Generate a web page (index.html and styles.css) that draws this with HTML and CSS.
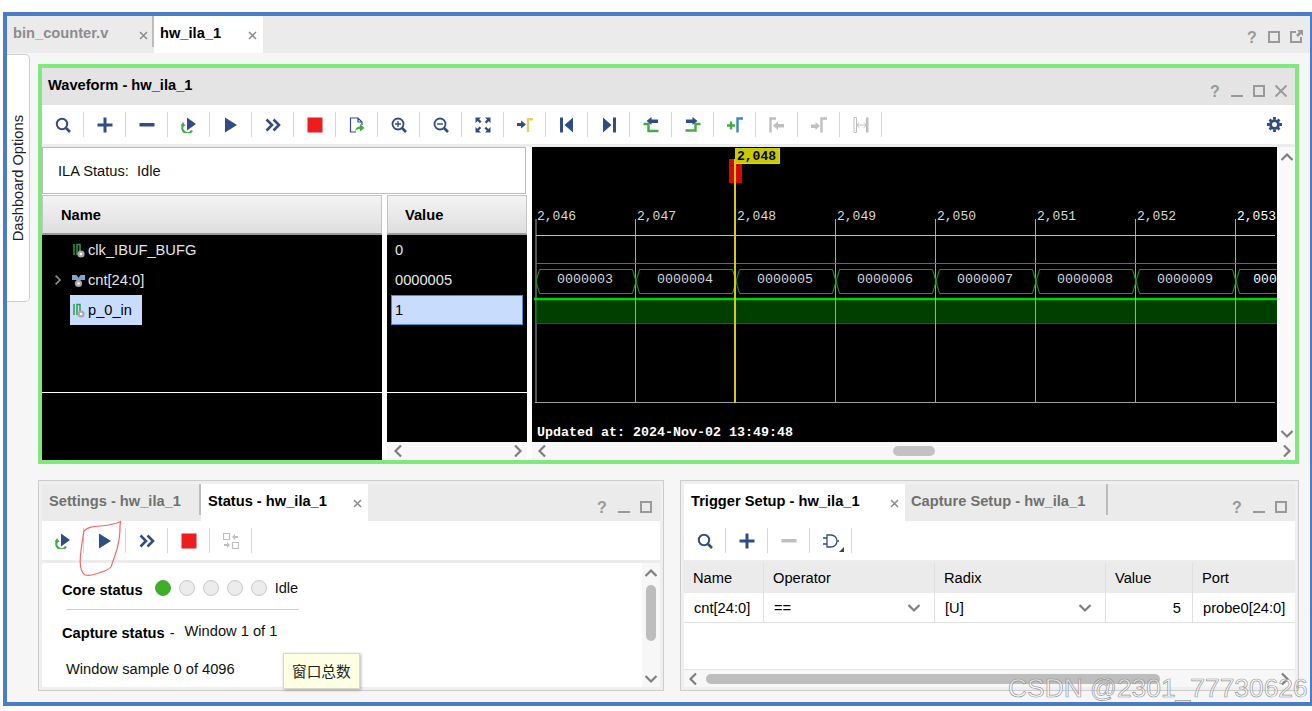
FILE: index.html
```html
<!DOCTYPE html>
<html lang="en">
<head>
    <meta charset="UTF-8">
    <meta name="viewport" content="width=device-width, initial-scale=1.0">
    <title>hw_ila_1</title>
    <link rel="stylesheet" href="styles.css">
</head>
<body>
    <!-- icon sheet -->
    <svg class="sheet" width="0" height="0">
        <symbol id="i-search" viewBox="0 0 16 16"><circle cx="7" cy="7" r="5.2" fill="none" stroke="currentColor" stroke-width="2"/><path d="M11 11l4 4" stroke="currentColor" stroke-width="2.6"/></symbol>
        <symbol id="i-plus" viewBox="0 0 16 16"><path d="M6.5.5h3v6h6v3h-6v6h-3v-6h-6v-3h6z" fill="currentColor"/></symbol>
        <symbol id="i-minus" viewBox="0 0 16 16"><rect x=".5" y="6" width="15" height="3.5" fill="currentColor"/></symbol>
        <symbol id="i-rerun" viewBox="0 0 16 16"><path d="M6 .5l9 6.5-9 6.5z" fill="currentColor"/><path d="M2 8.5a5 5 0 0 0 9 5" fill="none" stroke="#3fae3f" stroke-width="2.2"/><path d="M-.5 9h5l-2.5-4z" fill="#3fae3f"/></symbol>
        <symbol id="i-play" viewBox="0 0 16 16"><path d="M2 .5l12 7.5-12 7.5z" fill="currentColor"/></symbol>
        <symbol id="i-ff" viewBox="0 0 16 16"><path d="M1.5 2.5L7 8l-5.500 5.500M8.500 2.500L14 8l-5.500 5.500" fill="none" stroke="currentColor" stroke-width="2.6"/></symbol>
        <symbol id="i-stop" viewBox="0 0 16 16"><rect x=".5" y=".5" width="15" height="15" fill="#ee1c1c"/></symbol>
        <symbol id="i-export" viewBox="0 0 16 16"><path d="M7 15H1.5V1H9l4 4v3M9 1v4h4" fill="none" stroke="currentColor" stroke-width="1.2"/><path d="M6 14c.5-3 2.5-4.5 5-4.5V7l4.500 4-4.500 3.500V12c-2 0-3.500.5-5 2z" fill="#3fae3f"/></symbol>
        <symbol id="i-zoomin" viewBox="0 0 16 16"><circle cx="7" cy="7" r="5.5" fill="none" stroke="currentColor" stroke-width="1.8"/><path d="M11 11l4 4" stroke="currentColor" stroke-width="2.6"/><path d="M4 7h6M7 4v6" stroke="currentColor" stroke-width="1.3"/></symbol>
        <symbol id="i-zoomout" viewBox="0 0 16 16"><circle cx="7" cy="7" r="5.5" fill="none" stroke="currentColor" stroke-width="1.8"/><path d="M11 11l4 4" stroke="currentColor" stroke-width="2.6"/><path d="M4 7h6" stroke="currentColor" stroke-width="1.4"/></symbol>
        <symbol id="i-fit" viewBox="0 0 16 16"><path d="M.5.5H6L4.200 2.300l2.300 2.300-1.600 1.600-2.300-2.300L.5 6zM15.500.5V6l-1.800-1.800-2.300 2.300-1.600-1.600 2.300-2.300L10 .5zM.5 15.500V10l1.800 1.800 2.300-2.300 1.600 1.600-2.300 2.300L6 15.500zM15.500 15.500H10l1.800-1.800-2.300-2.300 1.600-1.600 2.300 2.300 2.100-2.100z" fill="currentColor"/></symbol>
        <symbol id="i-mark" viewBox="0 0 16 16"><path d="M0 6h4V3.500l5 4-5 4V9H0z" fill="currentColor"/><path d="M11 15V2.200h5" fill="none" stroke="#e6d06c" stroke-width="2.4"/></symbol>
        <symbol id="i-first" viewBox="0 0 16 16"><rect x="1" y=".5" width="3" height="15" fill="currentColor"/><path d="M14 .5v15L5.500 8z" fill="currentColor"/></symbol>
        <symbol id="i-last" viewBox="0 0 16 16"><rect x="12" y=".5" width="3" height="15" fill="currentColor"/><path d="M2 .5v15L10.500 8z" fill="currentColor"/></symbol>
        <symbol id="i-stepl" viewBox="0 0 16 16"><path d="M.5 7h5v7h10" fill="none" stroke="#3fae3f" stroke-width="2.4"/><path d="M3.500 4l5-4v2.500H15V6H8.500v2z" fill="currentColor"/></symbol>
        <symbol id="i-stepr" viewBox="0 0 16 16"><path d="M.5 13.500h10V7h5" fill="none" stroke="#3fae3f" stroke-width="2.4"/><path d="M12.500 4l-5-4v2.500H1V6h6.500v2z" fill="currentColor"/></symbol>
        <symbol id="i-addmark" viewBox="0 0 16 16"><path d="M0 8.500h8M4 4.500v8" stroke="#3fae3f" stroke-width="2.4"/><path d="M10.500 15.500V1.500H16" fill="none" stroke="#3d88bb" stroke-width="2.4"/></symbol>
        <symbol id="i-prevm" viewBox="0 0 16 16"><path d="M1.500 15.500V1.500H7" fill="none" stroke="currentColor" stroke-width="2.4"/><path d="M4 8.500l5-4V7h6v3.500H9V13z" fill="currentColor"/></symbol>
        <symbol id="i-nextm" viewBox="0 0 16 16"><path d="M10.500 15.500V1.500H16" fill="none" stroke="currentColor" stroke-width="2.4"/><path d="M9 9L4.500 5v2.500H0V11h4.500v2z" fill="currentColor"/></symbol>
        <symbol id="i-span" viewBox="0 0 16 16"><path d="M1 .5h2.500v15H1z" fill="none" stroke="currentColor"/><rect x="13" y=".5" width="2.500" height="15" fill="currentColor"/><path d="M4 8h9M6 5.500L3.800 8 6 10.500M11 5.500L13.200 8 11 10.500" fill="none" stroke="currentColor"/></symbol>
        <symbol id="i-swap" viewBox="0 0 16 16"><path d="M.5.5h6v6h-6zM9.500 9.500h6v6h-6z" fill="none" stroke="currentColor" stroke-width="1.2"/><path d="M9 4l3-3v2h3v2h-3v2zM7 12l-3 3v-2H1v-2h3V9z" fill="currentColor"/></symbol>
        <symbol id="i-gate" viewBox="0 0 16 16"><path d="M4 2h4a6 6 0 0 1 0 12H4zM0 5h4M0 11h4M14 8h2" fill="none" stroke="currentColor" stroke-width="1.3"/></symbol>
        <symbol id="i-min" viewBox="0 0 14 14"><rect x="1" y="11" width="12" height="2" fill="currentColor"/></symbol>
        <symbol id="i-max" viewBox="0 0 14 14"><rect x="2" y="2" width="10" height="10" fill="none" stroke="currentColor" stroke-width="2"/></symbol>
        <symbol id="i-pop" viewBox="0 0 14 14"><path d="M7 2H2v10h10V7" fill="none" stroke="currentColor" stroke-width="2"/><path d="M8 0h6v6l-2-2-3 3-2-2 3-3z" fill="currentColor"/></symbol>
        <symbol id="i-close" viewBox="0 0 14 14"><path d="M1.500 1.500l11 11M12.500 1.500l-11 11" stroke="currentColor" stroke-width="1.8"/></symbol>
        <symbol id="i-x" viewBox="0 0 9 9"><path d="M1 1l7 7M8 1L1 8" stroke="currentColor" stroke-width="1.5"/></symbol>
        <symbol id="i-up" viewBox="0 0 14 10"><path d="M1.500 8L7 2.500 12.500 8" fill="none" stroke="currentColor" stroke-width="2.2"/></symbol>
        <symbol id="i-down" viewBox="0 0 14 10"><path d="M1.500 2L7 7.500 12.500 2" fill="none" stroke="currentColor" stroke-width="2.2"/></symbol>
        <symbol id="i-left" viewBox="0 0 10 14"><path d="M8 1.500L2.500 7 8 12.500" fill="none" stroke="currentColor" stroke-width="2.2"/></symbol>
        <symbol id="i-right" viewBox="0 0 10 14"><path d="M2 1.500L7.500 7 2 12.500" fill="none" stroke="currentColor" stroke-width="2.2"/></symbol>
        <symbol id="i-wire" viewBox="0 0 13 15"><path d="M2 1v11M5 12V1.500h3V8" fill="none" stroke="#2f9c4a" stroke-width="1.5"/><circle cx="9" cy="11" r="3.600" fill="#a9a9a9"/><circle cx="9" cy="11" r="1.300" fill="#fff"/></symbol>
        <symbol id="i-bus" viewBox="0 0 13 15"><path d="M0 2h4.500l2 3 2-3H13v5H9L6.500 9 4 7H0z" fill="#7da7c9"/><circle cx="6.500" cy="10.500" r="3.600" fill="#a9a9a9"/><circle cx="6.500" cy="10.500" r="1.300" fill="#fff"/></symbol>
        <symbol id="i-gear" viewBox="0 0 16 16"><circle cx="8" cy="8" r="4.200" fill="none" stroke="currentColor" stroke-width="3"/><path d="M6.500 0h3v3h-3zM6.500 13h3v3h-3zM0 6.500h3v3H0zM13 6.500h3v3h-3zM1.700 3.800l2.100-2.100 2 2-2.100 2.100zM10.200 12.300l2.100-2.100 2 2-2.100 2.100zM1.700 12.200l2-2 2.100 2.100-2 2zM10.200 3.700l2-2 2.100 2.100-2 2z" fill="currentColor"/></symbol>
    </svg>

    <div class="frame">
        <div class="tabs top-tabs">
            <div class="tab off tab-file">bin_counter.v<svg class="tab-x"><use href="#i-x"/></svg></div>
            <div class="tab on tab-ila">hw_ila_1<svg class="tab-x"><use href="#i-x"/></svg></div>
            <div class="win-btns top-btns">
                <span class="help">?</span><svg><use href="#i-max"/></svg><svg><use href="#i-pop"/></svg>
            </div>
        </div>

        <div class="doc">
            <div class="side-tab"><span>Dashboard Options</span></div>

            <div class="work">
                <!-- waveform window -->
                <section class="wave-win">
                    <div class="title-bar">
                        <span class="title">Waveform - hw_ila_1</span>
                        <div class="win-btns">
                            <span class="help">?</span><svg><use href="#i-min"/></svg><svg><use href="#i-max"/></svg><svg><use href="#i-close"/></svg>
                        </div>
                    </div>
                    <div class="toolbar">
                        <div class="tool"><svg><use href="#i-search"/></svg></div>
                        <div class="tool"><svg><use href="#i-plus"/></svg></div>
                        <div class="tool"><svg><use href="#i-minus"/></svg></div>
                        <div class="tool"><svg><use href="#i-rerun"/></svg></div>
                        <div class="tool"><svg><use href="#i-play"/></svg></div>
                        <div class="tool"><svg><use href="#i-ff"/></svg></div>
                        <div class="tool"><svg><use href="#i-stop"/></svg></div>
                        <div class="tool"><svg><use href="#i-export"/></svg></div>
                        <div class="tool"><svg><use href="#i-zoomin"/></svg></div>
                        <div class="tool"><svg><use href="#i-zoomout"/></svg></div>
                        <div class="tool"><svg><use href="#i-fit"/></svg></div>
                        <div class="tool"><svg><use href="#i-mark"/></svg></div>
                        <div class="tool"><svg><use href="#i-first"/></svg></div>
                        <div class="tool"><svg><use href="#i-last"/></svg></div>
                        <div class="tool"><svg><use href="#i-stepl"/></svg></div>
                        <div class="tool"><svg><use href="#i-stepr"/></svg></div>
                        <div class="tool"><svg><use href="#i-addmark"/></svg></div>
                        <div class="tool off"><svg><use href="#i-prevm"/></svg></div>
                        <div class="tool off"><svg><use href="#i-nextm"/></svg></div>
                        <div class="tool off"><svg><use href="#i-span"/></svg></div>
                        <svg class="gear"><use href="#i-gear"/></svg>
                    </div>

                    <div class="wave-body">
                        <div class="signals">
                            <div class="ila-status">ILA Status:&nbsp; Idle</div>
                            <div class="sig-cols">
                                <div class="name-col">
                                    <div class="col-head">Name</div>
                                    <div class="sig-rows">
                                        <div class="sig-row"><svg class="sig-ico"><use href="#i-wire"/></svg><span>clk_IBUF_BUFG</span></div>
                                        <div class="sig-row"><svg class="sig-arrow"><use href="#i-right"/></svg><svg class="sig-ico"><use href="#i-bus"/></svg><span>cnt[24:0]</span></div>
                                        <div class="sig-row"><div class="sig-sel"><svg class="sig-ico"><use href="#i-wire"/></svg><span>p_0_in</span></div></div>
                                    </div>
                                </div>
                                <div class="value-col">
                                    <div class="col-head">Value</div>
                                    <div class="sig-rows">
                                        <div class="val-row">0</div>
                                        <div class="val-row">0000005</div>
                                        <div class="val-row val-sel">1</div>
                                    </div>
                                    <div class="val-rest"></div>
                                    <div class="hscroll">
                                        <svg class="arr-h"><use href="#i-left"/></svg>
                                        <svg class="arr-h"><use href="#i-right"/></svg>
                                    </div>
                                </div>
                            </div>
                        </div>

                        <div class="wave-col">
                            <div class="wave-top">
                                <svg class="wave" width="745" height="295" viewBox="532 147 745 295">
                                    <rect x="532" y="147" width="745" height="295" fill="#000"/>
                                    <g class="tick-lines">
                                        <path d="M536 219V403" stroke="#777"/>
                                        <path d="M635.5 219V403M835.5 219V403M935.5 219V403M1035.5 219V403M1135.5 219V403M1235.5 219V403"/>
                                    </g>
                                    <path d="M536 235.5H1275" stroke="#bdbdbd"/>
                                    <path d="M536 263.5H1277" stroke="#1a9c1a"/>
                                    <g class="bus">
                                        <path d="M536 281.5l3.500-12h93l3.500 12-3.500 12h-93z"/>
                                        <path d="M636 281.5l3.500-12h93l3.500 12-3.500 12h-93z"/>
                                        <path d="M736 281.5l3.500-12h93l3.500 12-3.500 12h-93z"/>
                                        <path d="M836 281.5l3.500-12h93l3.500 12-3.500 12h-93z"/>
                                        <path d="M936 281.5l3.500-12h93l3.500 12-3.500 12h-93z"/>
                                        <path d="M1036 281.5l3.500-12h93l3.500 12-3.500 12h-93z"/>
                                        <path d="M1136 281.5l3.500-12h93l3.500 12-3.500 12h-93z"/>
                                        <path d="M1236 281.5l3.500-12h50"/>
                                        <path d="M1236 281.5l3.500 12h50"/>
                                    </g>
                                    <g class="bus-text">
                                        <text x="585" y="283">0000003</text>
                                        <text x="685" y="283">0000004</text>
                                        <text x="785" y="283">0000005</text>
                                        <text x="885" y="283">0000006</text>
                                        <text x="985" y="283">0000007</text>
                                        <text x="1085" y="283">0000008</text>
                                        <text x="1185" y="283">0000009</text>
                                        <text x="1265" y="283" class="bright last-cell">000</text>
                                    </g>
                                    <rect x="536" y="300" width="741" height="23" fill="#003f00"/>
                                    <path d="M536.5 300V323.5H1277" fill="none" stroke="#0b6f0b"/>
                                    <path d="M534 299H1277" stroke="#00d400" stroke-width="2.500"/>
                                    <g class="tick-lines">
                                        <path d="M635.5 294V403M835.5 294V403M935.5 294V403M1035.5 294V403M1135.5 294V403M1235.5 294V403"/>
                                    </g>
                                    <path d="M535 402.5H1275" stroke="#a0a0a0"/>
                                    <g class="ticks">
                                        <text x="537" y="220">2,046</text>
                                        <text x="637" y="220">2,047</text>
                                        <text x="737" y="220">2,048</text>
                                        <text x="837" y="220">2,049</text>
                                        <text x="937" y="220">2,050</text>
                                        <text x="1037" y="220">2,051</text>
                                        <text x="1137" y="220">2,052</text>
                                        <text x="1237" y="220" class="bright">2,053</text>
                                    </g>
                                    <rect x="729" y="159" width="13" height="24" fill="#d40a0a"/>
                                    <path d="M731 165.5h7" stroke="#000" stroke-dasharray="2 1"/>
                                    <rect x="735" y="148" width="44" height="15" fill="#c9c900"/>
                                    <path d="M735 163.5H779.5V148" fill="none" stroke="#c9c9a0"/>
                                    <text x="737" y="160" class="cursor-label">2,048</text>
                                    <rect x="734" y="159" width="2" height="244" fill="#d6cb12"/>
                                    <text x="537" y="436" class="updated">Updated at: 2024-Nov-02 13:49:48</text>
                                </svg>
                                <div class="vscroll wave-v">
                                    <svg class="arr-v"><use href="#i-up"/></svg>
                                    <svg class="arr-v"><use href="#i-down"/></svg>
                                </div>
                            </div>
                            <div class="hscroll wave-h">
                                <svg class="arr-h"><use href="#i-left"/></svg>
                                <div class="h-thumb-track"><div class="h-thumb"></div></div>
                                <svg class="arr-h"><use href="#i-right"/></svg>
                            </div>
                        </div>
                    </div>
                </section>

                <div class="lower">
                    <!-- settings / status -->
                    <section class="panel panel-status">
                        <div class="tabs">
                            <div class="tab off tab-settings">Settings - hw_ila_1</div>
                            <div class="tab on tab-status">Status - hw_ila_1<svg class="tab-x"><use href="#i-x"/></svg></div>
                            <div class="win-btns">
                                <span class="help">?</span><svg><use href="#i-min"/></svg><svg><use href="#i-max"/></svg>
                            </div>
                        </div>
                        <div class="toolbar">
                            <div class="tool"><svg><use href="#i-rerun"/></svg></div>
                            <div class="tool"><svg><use href="#i-play"/></svg></div>
                            <div class="tool"><svg><use href="#i-ff"/></svg></div>
                            <div class="tool"><svg><use href="#i-stop"/></svg></div>
                            <div class="tool off"><svg><use href="#i-swap"/></svg></div>
                        </div>
                        <div class="status-body">
                            <div class="status-text">
                                <div class="core-row">
                                    <strong>Core status</strong>
                                    <div class="leds">
                                        <i class="led led-on"></i><i class="led"></i><i class="led"></i><i class="led"></i><i class="led"></i>
                                    </div>
                                    <span>Idle</span>
                                </div>
                                <div class="rule"></div>
                                <div class="capture-row"><strong>Capture status</strong><span class="dash">-</span><span class="win-of">Window 1 of 1</span></div>
                                <div class="sample-row">Window sample 0 of 4096</div>
                            </div>
                            <div class="vscroll status-v">
                                <svg class="arr-v"><use href="#i-up"/></svg>
                                <div class="v-thumb"></div>
                                <svg class="arr-v"><use href="#i-down"/></svg>
                            </div>
                        </div>
                    </section>

                    <!-- trigger setup -->
                    <section class="panel panel-trigger">
                        <div class="tabs">
                            <div class="tab on tab-trigger">Trigger Setup - hw_ila_1<svg class="tab-x"><use href="#i-x"/></svg></div>
                            <div class="tab off tab-capture">Capture Setup - hw_ila_1</div>
                            <div class="win-btns">
                                <span class="help">?</span><svg><use href="#i-min"/></svg><svg><use href="#i-max"/></svg>
                            </div>
                        </div>
                        <div class="toolbar">
                            <div class="tool"><svg><use href="#i-search"/></svg></div>
                            <div class="tool"><svg><use href="#i-plus"/></svg></div>
                            <div class="tool off"><svg><use href="#i-minus"/></svg></div>
                            <div class="tool tool-gate"><svg><use href="#i-gate"/></svg><b class="corner"></b></div>
                        </div>
                        <div class="trig-body">
                            <div class="trow thead">
                                <div>Name</div><div>Operator</div><div>Radix</div><div>Value</div><div>Port</div>
                            </div>
                            <div class="trow">
                                <div>cnt[24:0]</div>
                                <div class="combo">==<svg class="arr-v"><use href="#i-down"/></svg></div>
                                <div class="combo">[U]<svg class="arr-v"><use href="#i-down"/></svg></div>
                                <div class="num">5</div>
                                <div>probe0[24:0]</div>
                            </div>
                            <div class="trig-rest"></div>
                            <div class="hscroll trig-h">
                                <svg class="arr-h"><use href="#i-left"/></svg>
                                <div class="trig-thumb"></div>
                                <svg class="arr-h"><use href="#i-right"/></svg>
                            </div>
                        </div>
                    </section>
                </div>
            </div>
        </div>
    </div>

    <div class="tooltip">窗口总数</div>

    <svg class="scribble" width="50" height="64" viewBox="76 518 50 64">
        <path d="M120.5 521.5C113 525 108 525.5 100 526c-7 .5-12 1-16 5-1.500 9-4 22-3.800 31 .2 6 .8 11 5 13 5 1.500 10-1 15-2.500 4-1.200 8-2 11-6 2-6 4-12 6-18 2-8 3-15 2.800-22.500z" fill="none" stroke="#f0686e" stroke-width="1.2"/>
    </svg>

    <div class="watermark">CSDN @2301_77730626</div>
</body>
</html>
```

FILE: styles.css
```css
* { box-sizing: border-box; }
html, body {
    margin: 0;
    height: 100%;
    overflow: hidden;
}
body {
    background: white;
    color: black;
    font-family: "Liberation Sans", Arial, sans-serif;
    font-size: 14.67px;
}
.sheet { display: block; }

.frame {
    width: 1309px;
    height: 694px;
    margin: 12px 0 0 3px;
    border: 4px solid #4a7ccb;
    border-right-width: 2px;
    background: #f6f6f6;
}

/* tabs */
.tabs {
    display: flex;
    height: 37px;
    background: #ebebeb;
    font-weight: bold;
}
.tab {
    display: flex;
    align-items: center;
    height: 37px;
    padding: 0 6px 3px 7px;
}
.tab.off {
    color: #707070;
    background: linear-gradient(#bdbdbd, #bdbdbd) right top / 2px 31px no-repeat;
}
.tab.on { background: white; }
.tab-x {
    width: 9px;
    height: 9px;
    margin: 5px 0 0 auto;
    color: #8c8c8c;
}
.top-tabs .tab.off { color: #8d8d8d; }
.tab-file { width: 147px; padding-left: 6px; }
.tab-ila { width: 109px; padding-left: 6px; }
.tab-settings { width: 159px; }
.tab-status { width: 167px; }
.tab-trigger { width: 221px; }
.tab-capture { width: 203px; padding-left: 6px; }

.win-btns {
    display: flex;
    gap: 8px;
    margin-left: auto;
    padding: 16px 8px 0 0;
    color: #999;
    font-weight: bold;
}
.win-btns svg { width: 14px; height: 14px; }
.help {
    width: 14px;
    height: 14px;
    font-size: 16px;
    line-height: 15px;
    text-align: center;
}
.top-btns { padding: 14px 7px 0 0; }

.doc {
    display: flex;
    align-items: flex-start;
    height: 649px;
}
.side-tab {
    display: flex;
    align-items: center;
    justify-content: center;
    width: 23px;
    height: 248px;
    margin: 1px 8px 0 0;
    background: white;
    border: 1px solid #ccc;
    border-left: none;
    border-radius: 0 5px 5px 0;
}
.side-tab span {
    writing-mode: vertical-rl;
    transform: rotate(180deg);
    color: #222;
}
.work {
    width: 1261px;
    margin-top: 11px;
}

/* waveform window */
.wave-win {
    height: 400px;
    border: 4px solid #80e87c;
    background: white;
}
.title-bar {
    display: flex;
    height: 37px;
    background: #e4e4e4;
    font-weight: bold;
}
.title { padding: 9px 0 0 6px; }
.title-bar .win-btns { padding: 16px 7px 0 0; }

.toolbar {
    display: flex;
    align-items: center;
    height: 42px;
    background: white;
    border-bottom: 3px solid #ececec;
}
.tool {
    display: flex;
    align-items: center;
    justify-content: center;
    width: 42px;
    height: 25px;
    border-right: 1px solid #d6d6d6;
    color: #2f4e85;
}
.tool svg { width: 16px; height: 16px; }
.tool.off { color: #bfbfbf; }
.tool-gate { position: relative; }
.corner {
    position: absolute;
    right: 7px;
    bottom: 1px;
    border-left: 5px solid transparent;
    border-bottom: 5px solid #444;
}
.gear {
    width: 15px;
    height: 15px;
    margin-left: auto;
    margin-right: 13px;
    color: #2f4e85;
}

.wave-body {
    display: flex;
    height: 313px;
}
.signals { width: 490px; }
.ila-status {
    width: 484px;
    height: 47px;
    padding: 15px 0 0 15px;
    border: 1px solid #bbb;
    color: #111;
}
.sig-cols {
    display: flex;
    gap: 5px;
    margin-top: 1px;
    height: 265px;
}
.name-col { width: 340px; background: black; }
.value-col {
    width: 140px;
    background: black;
    display: flex;
    flex-direction: column;
}
.col-head {
    height: 40px;
    padding: 11px 0 0 18px;
    font-weight: bold;
    background: linear-gradient(#f4f4f4, #dedede);
    border: 1px solid #c4c4c4;
    border-bottom: 2px solid #9a9a9a;
}
.value-col .col-head { padding-left: 17px; }
.sig-rows {
    height: 158px;
    border-bottom: 1px solid white;
    color: #e6e6e6;
}
.sig-row {
    display: flex;
    align-items: center;
    height: 30px;
    padding-left: 30px;
    position: relative;
}
.sig-ico { width: 13px; height: 15px; margin-right: 3px; flex: none; }
.sig-arrow {
    position: absolute;
    left: 12px;
    top: 9px;
    width: 8px;
    height: 12px;
    color: #8a8a8a;
}
.sig-sel {
    display: flex;
    align-items: center;
    width: 72px;
    height: 30px;
    margin-left: -2px;
    padding-left: 2px;
    background: #c8ddfd;
    color: black;
}
.val-row {
    height: 30px;
    padding: 7px 0 0 8px;
}
.val-sel {
    width: 132px;
    margin-left: 4px;
    padding: 6px 0 0 3px;
    background: #c8ddfd;
    border: 1px solid #4a90d0;
    color: black;
}
.val-rest { height: 49px; }

/* scrollbars */
.hscroll {
    display: flex;
    align-items: center;
    justify-content: space-between;
    height: 18px;
    padding: 0 4px 0 6px;
    background: #f7f7f7;
}
.arr-h { width: 10px; height: 14px; color: #7f7f7f; flex: none; }
.arr-v { width: 14px; height: 10px; color: #7f7f7f; flex: none; }
.vscroll {
    display: flex;
    flex-direction: column;
    align-items: center;
    justify-content: space-between;
    width: 16px;
    background: #f9f9f9;
}

.wave-col { width: 763px; }
.wave-top {
    display: flex;
    justify-content: space-between;
    height: 295px;
}
.wave { display: block; }
.wave-v { padding: 5px 0 3px; }
.wave-h { padding: 0 3px 0 5px; }
.h-thumb-track { flex: 1; padding-left: 346px; }
.h-thumb {
    width: 42px;
    height: 10px;
    border-radius: 5px;
    background: #c2c2c2;
}

.tick-lines path { stroke: #a6a6a6; fill: none; }
.bus path { fill: none; stroke: #18a018; }
.wave text {
    font-family: "Liberation Mono", "Courier New", monospace;
}
.ticks text { font-size: 13px; fill: #d8d8d8; }
.bus-text text { font-size: 13.33px; fill: #d8d8d8; text-anchor: middle; }
.bus-text text.last-cell { font-size: 13px; }
.wave text.bright { fill: white; }
.wave .cursor-label { font-size: 13px; font-weight: bold; fill: black; }
.wave .updated { font-size: 13.33px; font-weight: bold; fill: white; }

/* lower panels */
.lower {
    display: flex;
    gap: 16px;
    margin-top: 16px;
}
.panel {
    height: 211px;
    padding: 3px;
    border: 1px solid #ccc;
    background: #efefef;
}
.panel-status { width: 626px; }
.panel-trigger { width: 619px; }
.panel .win-btns { padding: 16px 7px 0 0; }

.status-body {
    display: flex;
    height: 124px;
    background: white;
}
.status-text {
    flex: 1;
    padding: 14px 0 0 20px;
    color: #111;
}
.status-text strong { color: black; }
.core-row {
    display: flex;
    align-items: center;
    height: 22px;
}
.core-row strong { padding-top: 4px; }
.leds {
    display: flex;
    gap: 8px;
    margin: 0 8px 0 12px;
}
.led {
    width: 16px;
    height: 16px;
    border-radius: 50%;
    background: #ececec;
    border: 1px solid #c8c8c8;
}
.led-on { background: #3fae29; border-color: #3fae29; }
.rule {
    width: 233px;
    height: 1px;
    margin: 10px 0 0 4px;
    background: #ccc;
}
.capture-row {
    display: flex;
    align-items: flex-start;
    margin-top: 13px;
}
.capture-row strong { padding-top: 2px; }
.dash { padding: 2px 0 0 5px; }
.win-of { margin-left: 10px; }
.sample-row { margin: 20px 0 0 4px; }

.status-v {
    width: 18px;
    height: 124px;
    padding: 5px 0 3px;
    justify-content: flex-start;
    background: #f7f7f7;
}
.v-thumb {
    width: 10px;
    height: 56px;
    margin: 7px 0 33px;
    border-radius: 5px;
    background: #bdbdbd;
}

.trig-body { height: 124px; background: white; }
.trow {
    display: grid;
    grid-template-columns: 80px 171px 171px 87px 102px;
    height: 30px;
    border-bottom: 1px solid #e0e0e0;
}
.trow > div {
    display: flex;
    align-items: center;
    padding-left: 10px;
    border-right: 1px solid #e0e0e0;
}
.trow > div:last-child { border-right: none; }
.thead { background: #ebebeb; border-bottom: none; }
.thead > div { padding-left: 9px; }
.trow > .combo { justify-content: space-between; padding-right: 13px; }
.trow > .num { justify-content: flex-end; padding-right: 11px; }
.trig-rest { height: 46px; }
.trig-h {
    padding: 0 5px 0 4px;
    border-top: 1px solid #e4e4e4;
    justify-content: flex-start;
}
.trig-thumb {
    width: 454px;
    height: 10px;
    margin: 0 auto 0 8px;
    border-radius: 5px;
    background: #bdbdbd;
}

/* things that float over the page */
.tooltip {
    position: absolute;
    left: 283px;
    top: 653px;
    width: 77px;
    height: 36px;
    padding: 8px 0 0 8px;
    background: #ffffe3;
    border: 1px solid #d8d8c8;
    box-shadow: 1px 1px 3px rgba(0, 0, 0, 0.3);
    color: #222;
    font-family: "Noto Sans CJK SC", "Liberation Sans", sans-serif;
    font-size: 14.67px;
    line-height: 18px;
}
.scribble {
    position: absolute;
    left: 76px;
    top: 518px;
}
.watermark {
    position: absolute;
    left: 1008px;
    top: 673px;
    font-size: 26.4px;
    line-height: 30px;
    white-space: nowrap;
    color: rgba(255, 255, 255, 0.55);
    -webkit-text-stroke: 0.7px rgba(125, 125, 125, 0.8);
}
```
